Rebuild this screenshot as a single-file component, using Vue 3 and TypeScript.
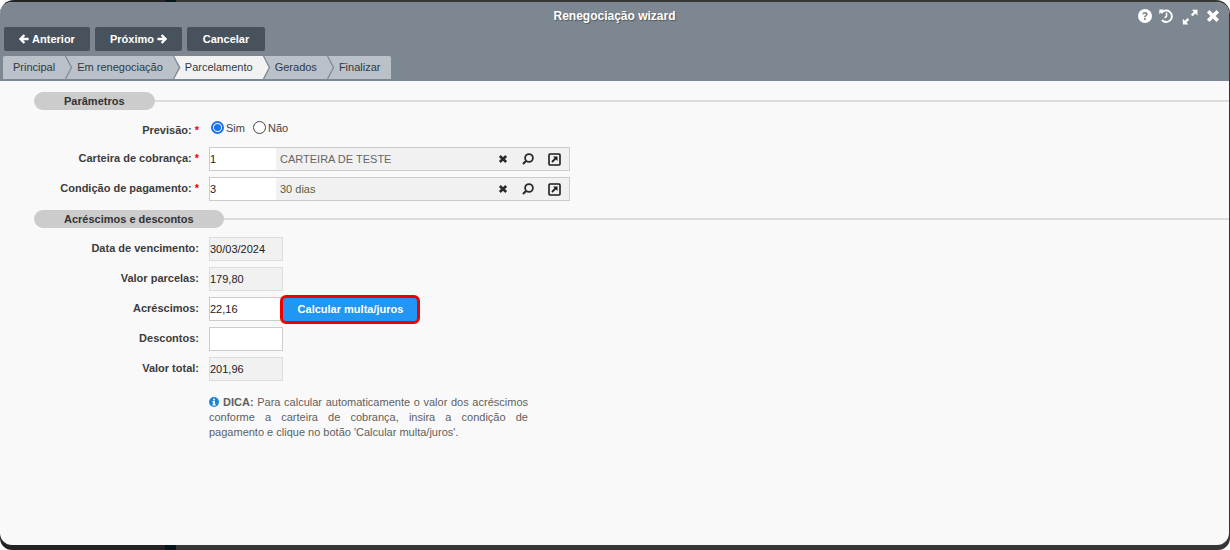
<script setup lang="ts">
interface Tab {
  label: string
  active?: boolean
}

interface LookupRow {
  label: string
  code: string
  text: string
  green?: boolean
}

interface ValueRow {
  label: string
  value: string
  readonly: boolean
  action?: string
}

const tabs: Tab[] = [
  { label: 'Principal' },
  { label: 'Em renegociação' },
  { label: 'Parcelamento', active: true },
  { label: 'Gerados' },
  { label: 'Finalizar' }
]

const lookups: LookupRow[] = [
  { label: 'Carteira de cobrança:', code: '1', text: 'CARTEIRA DE TESTE' },
  { label: 'Condição de pagamento:', code: '3', text: '30 dias', green: true }
]

const values: ValueRow[] = [
  { label: 'Data de vencimento:', value: '30/03/2024', readonly: true },
  { label: 'Valor parcelas:', value: '179,80', readonly: true },
  { label: 'Acréscimos:', value: '22,16', readonly: false, action: 'Calcular multa/juros' },
  { label: 'Descontos:', value: '', readonly: false },
  { label: 'Valor total:', value: '201,96', readonly: true }
]
</script>

<template>
  <div class="screen">
    <div class="dialog">
      <header class="head">
        <div class="title-bar">
          <span class="title">Renegociação wizard</span>
          <div class="win-icons">
            <svg class="help" width="14" height="14" viewBox="0 0 14 14">
              <circle cx="7" cy="7" r="7" fill="#fff" />
              <path d="M4.300 5.300C4.400 3.700 5.600 2.900 7.100 2.900c1.500 0 2.700.9 2.700 2.200 0 1.900-2 1.800-2 3.200H6c0-2.100 1.900-2 1.900-3.100 0-.5-.4-.8-.9-.8-.6 0-.9.4-1 .9z" fill="#7c8791" />
              <rect x="6" y="9.200" width="1.800" height="1.800" fill="#7c8791" />
            </svg>
            <svg width="14" height="14" viewBox="0 0 14 14" fill="none" stroke="#fff" stroke-width="1.900">
              <path d="M2.900 11A5.700 5.700 0 1 0 2.300 4.300" />
              <path d="M0.300 0.600L5 0.600 0.300 5.300Z" fill="#fff" stroke="none" />
              <path d="M7.500 3.700v3.700l-2 1.500" stroke-width="1.600" />
            </svg>
            <svg class="expand" width="16" height="16" viewBox="0 0 16 16" fill="#fff">
              <path d="M15.500.8v5.600l-2-2L10.600 7.300 8.900 5.600 11.800 2.700 9.900.8z" />
              <path d="M.8 15.400V9.800l2 2L5.500 9l1.700 1.700-2.700 2.800 1.900 1.900z" />
            </svg>
            <svg width="14" height="14" viewBox="0 0 14 14">
              <path d="M2.200 2.200L11.800 11.800M11.800 2.200L2.200 11.800" stroke="#fff" stroke-width="3.600" />
            </svg>
          </div>
        </div>

        <div class="actions">
          <button class="action">
            <svg width="10" height="10" viewBox="0 0 12 12"><path d="M6.500 1.200L1.700 6 6.500 10.800M2.300 6H11.500" fill="none" stroke="#fff" stroke-width="2.800" /></svg>
            Anterior
          </button>
          <button class="action next">
            Próximo
            <svg width="10" height="10" viewBox="0 0 12 12"><path d="M5.500 1.200L10.300 6 5.500 10.800M9.700 6H.5" fill="none" stroke="#fff" stroke-width="2.800" /></svg>
          </button>
          <button class="action cancel">Cancelar</button>
        </div>

        <nav class="tabs">
          <div v-for="tab in tabs" :key="tab.label" class="tab" :class="{ active: tab.active }">
            <span class="tab-label">{{ tab.label }}</span>
            <svg class="chevron" width="9" height="23" viewBox="0 0 9 23">
              <path d="M0.500 0L6.500 11.500 0.500 23" fill="none" stroke="#7d8790" stroke-width="1.200" />
            </svg>
          </div>
        </nav>
      </header>

      <main class="body">
        <div class="section">
          <h3 class="pill first">Parâmetros</h3>
          <div class="rule"></div>
        </div>

        <div class="row radio-row">
          <label class="label">Previsão: <em>*</em></label>
          <div class="radios">
            <span class="radio on"></span><span class="radio-text">Sim</span>
            <span class="radio"></span><span class="radio-text">Não</span>
          </div>
        </div>

        <div v-for="row in lookups" :key="row.label" class="row">
          <label class="label">{{ row.label }} <em>*</em></label>
          <div class="lookup">
            <input class="code" :value="row.code" />
            <div class="lookup-text" :class="{ green: row.green }">{{ row.text }}</div>
            <div class="lookup-icons">
              <svg width="10" height="10" viewBox="0 0 10 10">
                <path d="M1.800 2L8.200 8M8.200 2L1.800 8" stroke="#2b2b2b" stroke-width="2.600" />
              </svg>
              <svg width="14" height="14" viewBox="0 0 14 14" fill="none" stroke="#2b2b2b">
                <circle cx="8" cy="6" r="3.900" stroke-width="1.800" />
                <path d="M5 9L2 12" stroke-width="2.200" />
              </svg>
              <svg width="13" height="13" viewBox="0 0 13 13" fill="none" stroke="#1c1c1c">
                <rect x="1" y="1" width="11" height="11" rx="1" stroke-width="1.600" />
                <path d="M4 9L8.300 4.700" stroke-width="1.800" />
                <path d="M5 3.500H9.500V8Z" fill="#1c1c1c" stroke="none" />
              </svg>
            </div>
          </div>
        </div>

        <div class="section second">
          <h3 class="pill wide">Acréscimos e descontos</h3>
          <div class="rule"></div>
        </div>

        <div v-for="row in values" :key="row.label" class="row">
          <label class="label">{{ row.label }}</label>
          <input class="field" :class="{ readonly: row.readonly }" :value="row.value" :readonly="row.readonly" />
          <button v-if="row.action" class="calc">{{ row.action }}</button>
        </div>

        <p class="tip">
          <svg class="info" width="10" height="10" viewBox="0 0 10 10">
            <circle cx="5" cy="5" r="5" fill="#1f83d8" />
            <rect x="4.100" y="1.700" width="1.800" height="1.600" fill="#fff" />
            <path d="M3.400 4.100H5.900V7.300H6.700V8.400H3.400V7.300H4.200V5.200H3.400Z" fill="#fff" />
          </svg>
          <b>DICA:</b> Para calcular automaticamente o valor dos acréscimos conforme a carteira de cobrança, insira a condição de pagamento e clique no botão 'Calcular multa/juros'.
        </p>
      </main>
    </div>
  </div>
</template>

<style>
html,
body {
  margin: 0;
  background: #fff;
  overflow: hidden;
}
</style>

<style scoped>
.screen {
  width: 1230px;
  height: 550px;
  box-sizing: border-box;
  padding-top: 2px;
  padding-bottom: 5px;
  padding-right: 1px;
  background: linear-gradient(90deg, #232323 165px, #07161c 165px, #07161c 176px, #363636 176px);
  border-radius: 14px 14px 12px 12px;
  overflow: hidden;
  font-family: "Liberation Sans", Arial, sans-serif;
  font-size: 11px;
  color: #333;
}

.dialog {
  height: 100%;
  display: flex;
  flex-direction: column;
  background: #f9f9f9;
  border-radius: 12px;
  overflow: hidden;
}

.head {
  height: 79px;
  flex: none;
  box-sizing: border-box;
  background: #7c8791;
  padding: 0 3px 0 3px;
}

.title-bar {
  height: 25px;
  display: flex;
  align-items: center;
  justify-content: center;
  position: relative;
}

.title {
  margin-top: 3px;
  color: #fff;
  font-size: 12px;
  font-weight: bold;
  text-shadow: 1px 1px 1px rgba(0, 0, 0, 0.35);
}

.win-icons {
  position: absolute;
  right: 6px;
  top: 7px;
  display: flex;
  align-items: flex-start;
  gap: 9px;
}

.win-icons .help {
  margin-right: -2px;
}

.win-icons .expand {
  margin-right: -1px;
}

.actions {
  display: flex;
  gap: 5px;
  padding-left: 1px;
}

.action {
  height: 24px;
  width: 86px;
  padding: 0;
  border: none;
  border-radius: 2px;
  background: #47525c;
  color: #fff;
  font-family: inherit;
  font-size: 11px;
  font-weight: bold;
  display: flex;
  align-items: center;
  justify-content: center;
  gap: 3px;
}

.action.next {
  width: 87px;
}

.action.cancel {
  width: 78px;
}

.tabs {
  margin-top: 5px;
  display: flex;
  width: 388px;
  height: 23px;
  background: #bac1c9;
  border-radius: 2px 2px 0 0;
}

.tab {
  position: relative;
  height: 23px;
  line-height: 23px;
  padding: 0 12px 0 10px;
  color: #2f3a44;
  font-size: 11px;
  white-space: nowrap;
}

.tab:last-child .chevron {
  display: none;
}

.tab.active::before {
  content: "";
  position: absolute;
  top: 0;
  bottom: 0;
  left: -1px;
  right: -4px;
  background: #f2f2f2;
  clip-path: polygon(0 0, calc(100% - 6px) 0, 100% 50%, calc(100% - 6px) 100%, 0 100%, 7px 50%);
}

.tab-label {
  position: relative;
}

.chevron {
  position: absolute;
  top: 0;
  right: -7px;
  z-index: 1;
}

.body {
  flex: 1;
  padding-top: 11px;
}

.section {
  display: flex;
  align-items: center;
  margin-left: 34px;
  height: 18px;
}

.section.second {
  margin-top: 9px;
  margin-bottom: 9px;
}

.pill {
  margin: 0;
  height: 18px;
  line-height: 18px;
  background: #ccc;
  border-radius: 9px;
  box-sizing: border-box;
  font-size: 11px;
  font-weight: bold;
  color: #333;
}

.pill.first {
  width: 121px;
  padding-left: 30px;
}

.pill.wide {
  width: 190px;
  padding-left: 30px;
}

.rule {
  flex: 1;
  height: 2px;
  background: #ddd;
}

.row {
  display: flex;
  align-items: center;
  height: 24px;
  margin-bottom: 6px;
}

.radio-row {
  margin-top: 7px;
}

.label {
  width: 209px;
  flex: none;
  box-sizing: border-box;
  margin-bottom: 2px;
  padding-right: 10px;
  text-align: right;
  font-weight: bold;
  color: #3c3c3c;
}

.radio-row .label {
  margin-top: 2px;
  margin-bottom: 0;
}

.label em {
  color: #e00;
  font-style: normal;
}

.radios {
  display: flex;
  align-items: center;
  margin-bottom: 3px;
  margin-left: 2px;
}

.radio {
  width: 13px;
  height: 13px;
  box-sizing: border-box;
  border-radius: 50%;
  border: 1px solid #444;
  background: #fff;
}

.radio.on {
  border: 2px solid #1a73e8;
  padding: 1px;
  background: #1a73e8 content-box;
}

.radio-text {
  margin-left: 2px;
  margin-right: 8px;
  color: #444;
}

.lookup {
  display: flex;
  width: 361px;
  height: 24px;
  box-sizing: border-box;
  border: 1px solid #ccc;
  background: #f1f1f1;
}

.code {
  width: 66px;
  box-sizing: border-box;
  border: none;
  padding: 0;
  background: #fff;
  font-family: inherit;
  font-size: 11px;
  color: #222;
  outline: none;
}

.lookup-text {
  flex: 1;
  padding-left: 4px;
  line-height: 22px;
  color: #666;
}

.lookup-text.green {
  color: #5a5f3c;
}

.lookup-icons {
  display: flex;
  align-items: center;
  gap: 13px;
  padding-right: 8px;
}

.field {
  width: 74px;
  height: 24px;
  box-sizing: border-box;
  border: 1px solid #ccc;
  padding: 0;
  background: #fff;
  font-family: inherit;
  font-size: 11px;
  color: #222;
  outline: none;
}

.field.readonly {
  background: #f1f1f1;
  border-color: #ddd;
}

.calc {
  margin-left: -3px;
  width: 140px;
  height: 29px;
  box-sizing: border-box;
  border: 3px solid #f00000;
  border-radius: 6px;
  padding: 0 0 0 1px;
  background: #2196f3;
  color: #fff;
  font-family: inherit;
  font-size: 11px;
  font-weight: bold;
  position: relative;
}

.tip {
  margin: 14px 0 0 209px;
  width: 319px;
  line-height: 15px;
  font-size: 11px;
  color: #5f5f5f;
  text-align: justify;
}

.tip b {
  color: #5f5f5f;
}

.info {
  vertical-align: -1px;
  margin-right: 1px;
  padding-right: 3px;
  box-sizing: content-box;
}
</style>
